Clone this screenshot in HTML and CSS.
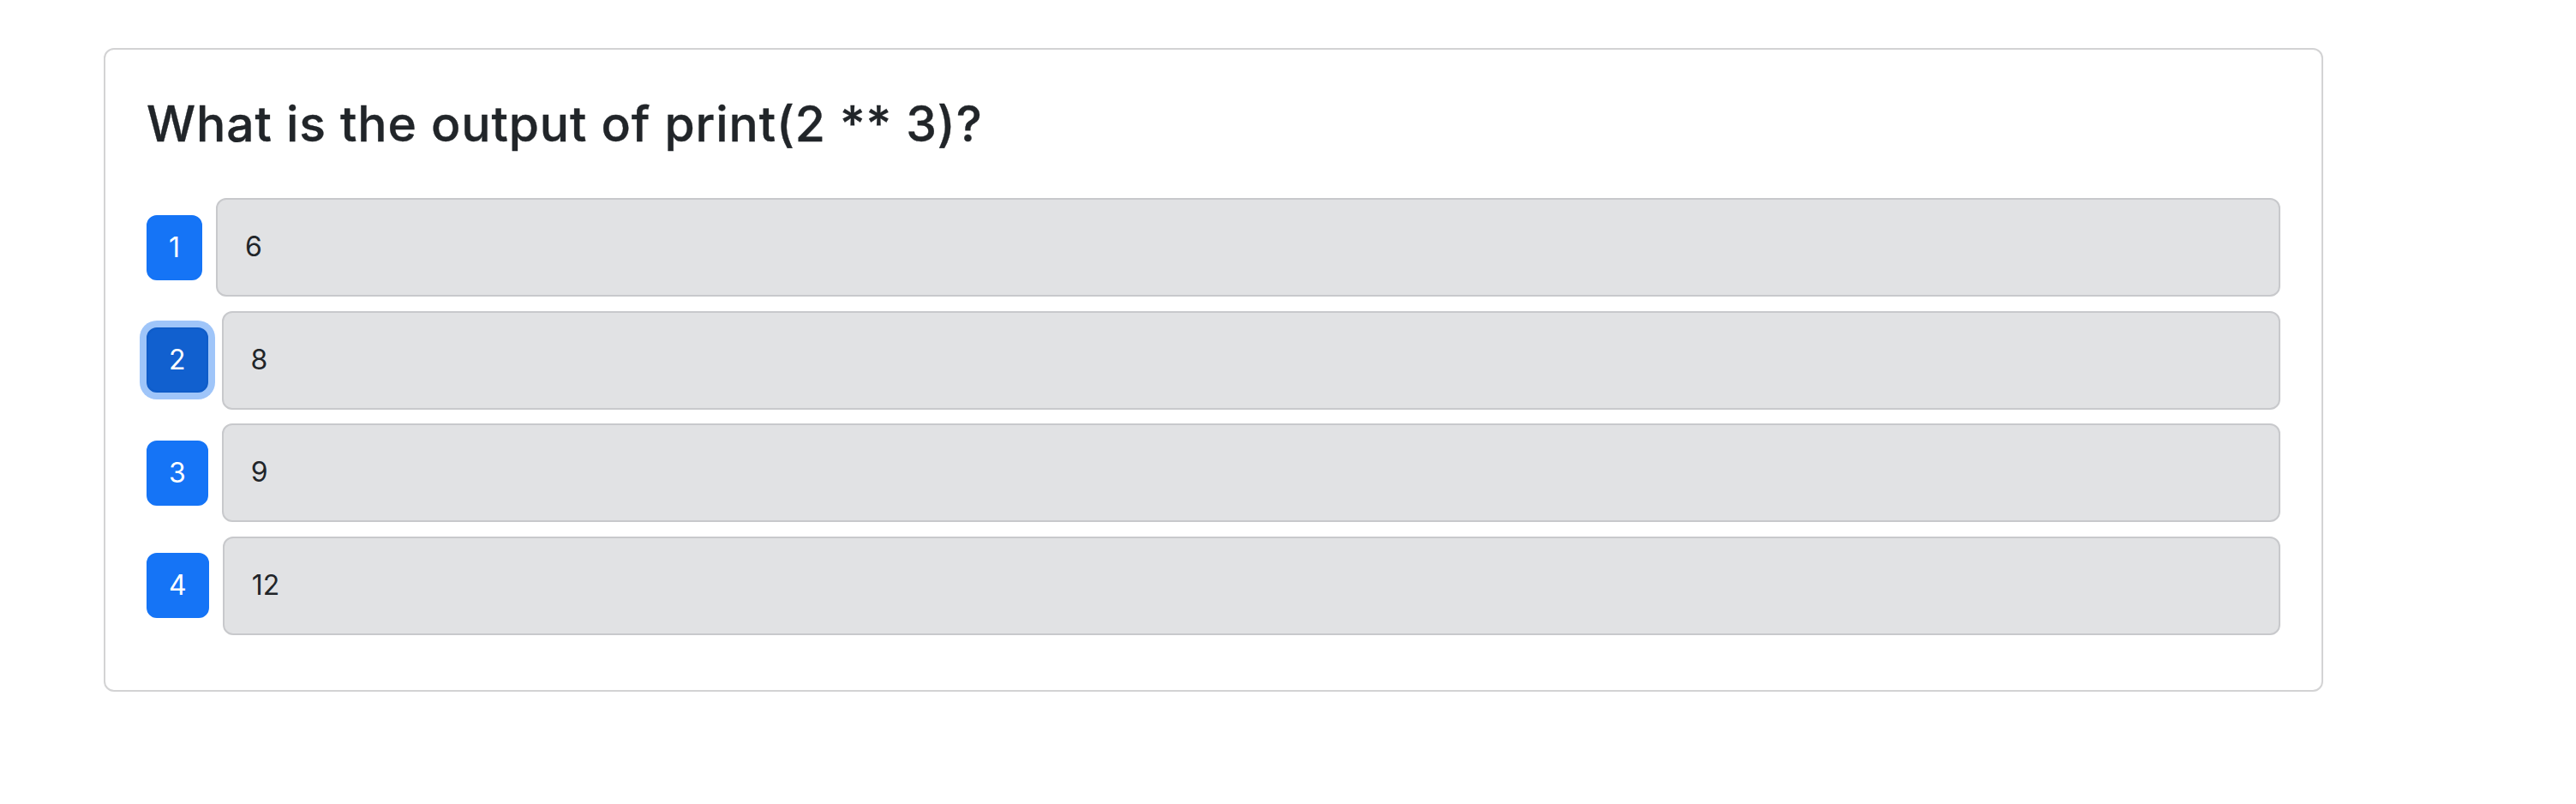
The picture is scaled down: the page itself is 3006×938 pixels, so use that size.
FILE: index.html
```html
<!DOCTYPE html>
<html lang="en">
<head>
<meta charset="utf-8">
<title>Quiz</title>
<link rel="stylesheet" href="styles.css">
</head>
<body>
<main class="page">
  <section class="card">
    <h3 class="question">What is the output of print(2 ** 3)?</h3>
    <div class="option">
      <button class="num">1</button>
      <div class="answer">6</div>
    </div>
    <div class="option">
      <button class="num active">2</button>
      <div class="answer">8</div>
    </div>
    <div class="option">
      <button class="num">3</button>
      <div class="answer">9</div>
    </div>
    <div class="option">
      <button class="num">4</button>
      <div class="answer">12</div>
    </div>
  </section>
</main>
</body>
</html>
```
FILE: styles.css
```css
* { box-sizing: border-box; }
html, body { margin: 0; background: #fff; }
body {
  font-family: Inter, "Liberation Sans", Arial, sans-serif;
  color: #212529;
}
.page {
  padding: 56px 0 0 121px;
}
.card {
  width: 2590px;
  border: 2px solid #d3d3d4;
  border-radius: 12px;
  padding: 48px;
  background: #fff;
}
.question {
  margin: 5px 0 52px;
  font-size: 57px;
  font-weight: 500;
  letter-spacing: 0.9px;
  line-height: 1.2;
  color: #212529;
  -webkit-text-stroke: 0.35px #212529;
}
.option {
  display: flex;
  align-items: center;
  gap: 16px;
  margin-bottom: 16.5px;
}
.num {
  flex: none;
  font-family: inherit;
  font-size: 32px;
  line-height: 48px;
  padding: 12px 24px;
  border: 2px solid #1574f6;
  border-radius: 12px;
  background: #1574f6;
  color: #fff;
}
.num.active {
  background: #1160cf;
  border-color: #0f5cc8;
  box-shadow: 0 0 0 8px #9fc5f9;
}
.answer {
  flex: 1;
  font-size: 32px;
  line-height: 48px;
  padding: 31px 32px 32px;
  background: #e1e2e4;
  border: 2px solid #c8c9cc;
  border-radius: 12px;
  color: #212529;
}
```
